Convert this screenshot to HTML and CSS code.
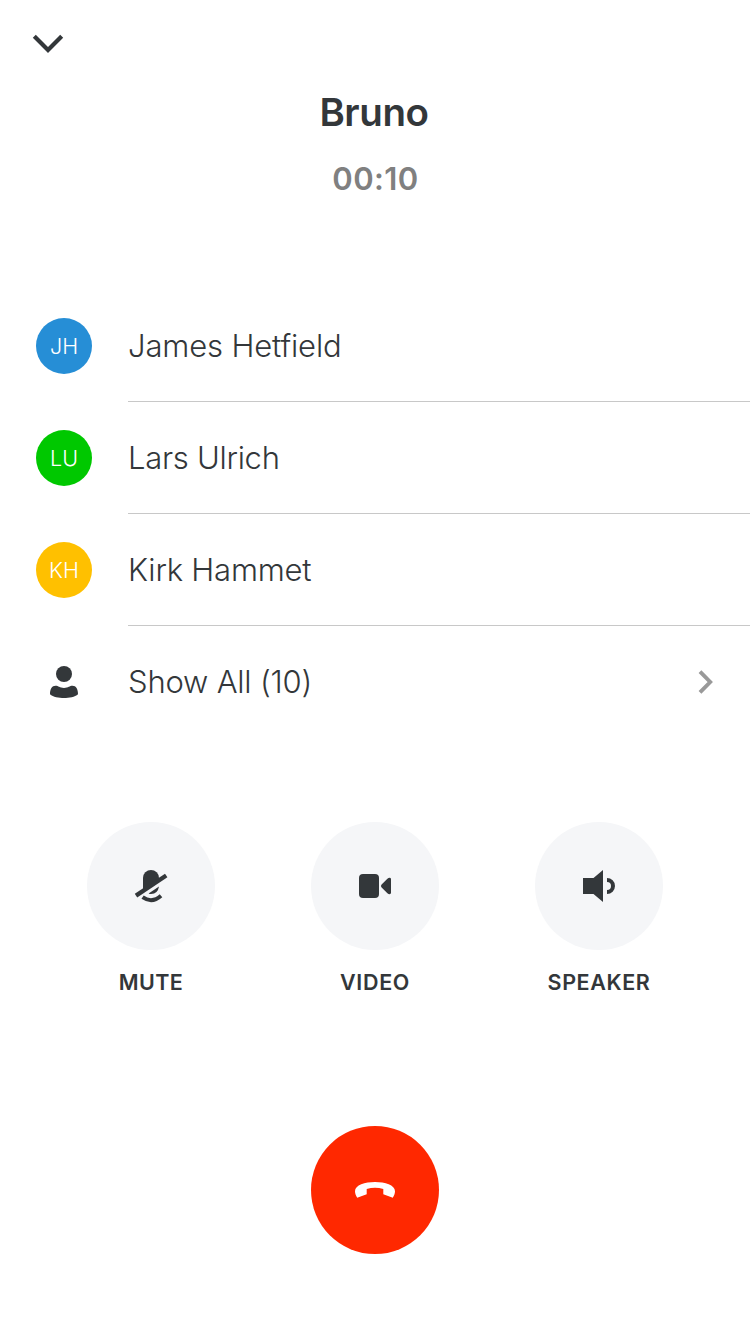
FILE: index.html
```html
<!DOCTYPE html>
<html lang="en">
<head>
<meta charset="utf-8">
<title>Call</title>
<link rel="stylesheet" href="styles.css">
</head>
<body>
<main class="call">
  <header class="header">
    <button class="collapse" aria-label="Minimize"><svg width="32" height="20" viewBox="0 0 32 20"><path d="M2.300 2.300 16 16 29.700 2.300" fill="none" stroke="currentColor" stroke-width="4.200"/></svg></button>
    <h1 class="title">Bruno</h1>
    <p class="timer">00:10</p>
  </header>
  <ul class="people">
    <li class="row"><span class="avatar blue">JH</span><span class="name"><span class="label james">James Hetfield</span></span></li>
    <li class="row"><span class="avatar green">LU</span><span class="name"><span class="label lars">Lars Ulrich</span></span></li>
    <li class="row"><span class="avatar yellow">KH</span><span class="name"><span class="label kirk">Kirk Hammet</span></span></li>
    <li class="row last">
      <span class="avatar"><svg width="32" height="32" viewBox="0 0 32 32" fill="currentColor"><circle cx="16" cy="8" r="8"/><path d="M2 28.200C2 23 4 19.800 7.500 19.800c3 0 4 2.200 8.500 2.200s5.500-2.200 8.500-2.200c3.500 0 5.500 3.200 5.500 8.400C27 31 21 32 16 32S5 31 2 28.200z"/></svg></span>
      <span class="name"><span class="label all">Show All (10)</span><svg class="next" width="16" height="24" viewBox="0 0 16 24"><path d="M2 1.700 12.200 12 2 22.300" fill="none" stroke="currentColor" stroke-width="3.900"/></svg></span>
    </li>
  </ul>
  <section class="controls">
    <div class="control">
      <button class="round"><svg width="34" height="34" viewBox="-1 -1 34 34" fill="currentColor"><path d="M8 20V8a8 8 0 0 1 16 0v2z"/><path d="M-.2 23.800 30 3.800l2.400 3.400L2.200 27.500z"/><path d="M13.600 23.400 24 16.600Q22.800 24 16 24q-1.300 0-2.400-.600z"/><path d="M7.600 27.200Q17 33.800 26 25.800" fill="none" stroke="currentColor" stroke-width="3.900"/></svg></button>
      <span class="caption mute">MUTE</span>
    </div>
    <div class="control">
      <button class="round"><svg width="32" height="24" viewBox="0 0 32 24" fill="currentColor"><rect width="20" height="24" rx="4"/><path d="M22.600 10.500 28.400 4.800Q29.400 3.800 30.600 3.800 32 3.800 32 5.200V18.800q0 1.400-1.400 1.400-1.200 0-2.200-1l-5.800-5.700q-1.500-1.500 0-3z"/></svg></button>
      <span class="caption video">VIDEO</span>
    </div>
    <div class="control">
      <button class="round"><svg width="32" height="32" viewBox="0 0 32 32" fill="currentColor"><path d="M0 8h10.500L20 0v32l-9.500-8H0z"/><path d="M24 10a6 6 0 0 1 0 12" fill="none" stroke="currentColor" stroke-width="4"/></svg></button>
      <span class="caption speaker">SPEAKER</span>
    </div>
  </section>
  <button class="hangup" aria-label="End call"><svg width="40" height="16" viewBox="0 0 40 16" fill="currentColor"><path d="M2.200 15.700C.800 13.500 0 11.500 0 9.300 0 3 10 0 20 0s20 3 20 9.300c0 2.200-.8 4.200-2.200 6.400L28.300 12.200V7Q20 4.600 11.700 7v5.200z"/></svg></button>
</main>
</body>
</html>
```
FILE: styles.css
```css
* { box-sizing: border-box; }
body { margin: 0; background: #fff; color: #33373a; font-family: Inter, "Liberation Sans", sans-serif; }
button { border: 0; padding: 0; background: none; color: inherit; font: inherit; }
svg { display: block; }
.call { width: 750px; height: 1334px; display: flex; flex-direction: column; align-items: center; }
.header { width: 100%; height: 290px; padding-top: 34px; display: flex; flex-direction: column; align-items: center; }
.collapse { align-self: flex-start; margin-left: 32px; height: 20px; }
.title { margin: 34px 0 0; padding-right: 2px; font-size: 38.5px; line-height: 48px; font-weight: 600; letter-spacing: -0.4px; }
.timer { margin: 23px 0 0; padding-left: 1px; font-size: 31px; line-height: 40px; font-weight: 600; letter-spacing: 0.4px; color: #808080; }
.people { width: 100%; margin: 0; padding: 0 0 0 36px; list-style: none; }
.row { height: 112px; display: flex; align-items: center; gap: 36px; }
.avatar { width: 56px; height: 56px; flex: none; border-radius: 50%; display: flex; align-items: center; justify-content: center; color: #fff; font-size: 21.5px; font-weight: 300; }
.blue { background: #268ed6; }
.green { background: #00c800; }
.yellow { background: #ffc000; }
.last .avatar { color: #33373a; }
.name { flex: 1; height: 112px; display: flex; align-items: center; justify-content: space-between; padding-right: 36px; border-bottom: 1px solid #c8c8c8; font-size: 31px; font-weight: 300; white-space: nowrap; }
.last .name { border-bottom-color: transparent; }
.james { letter-spacing: -0.15px; }
.lars { letter-spacing: -0.28px; }
.kirk { letter-spacing: -0.2px; }
.all { letter-spacing: -0.2px; }
.next { color: #999; }
.controls { margin-top: 84px; display: flex; gap: 96px; }
.control { width: 128px; display: flex; flex-direction: column; align-items: center; gap: 17px; }
.round { width: 128px; height: 128px; border-radius: 50%; background: #f5f6f8; display: flex; align-items: center; justify-content: center; }
.caption { font-size: 21.5px; line-height: 30px; font-weight: 600; }
.mute { letter-spacing: 0.4px; }
.video { letter-spacing: 0.7px; }
.speaker { letter-spacing: 0.6px; }
.hangup { width: 128px; height: 128px; margin-top: 129px; border-radius: 50%; background: #ff2800; color: #fff; display: flex; align-items: center; justify-content: center; }
```
